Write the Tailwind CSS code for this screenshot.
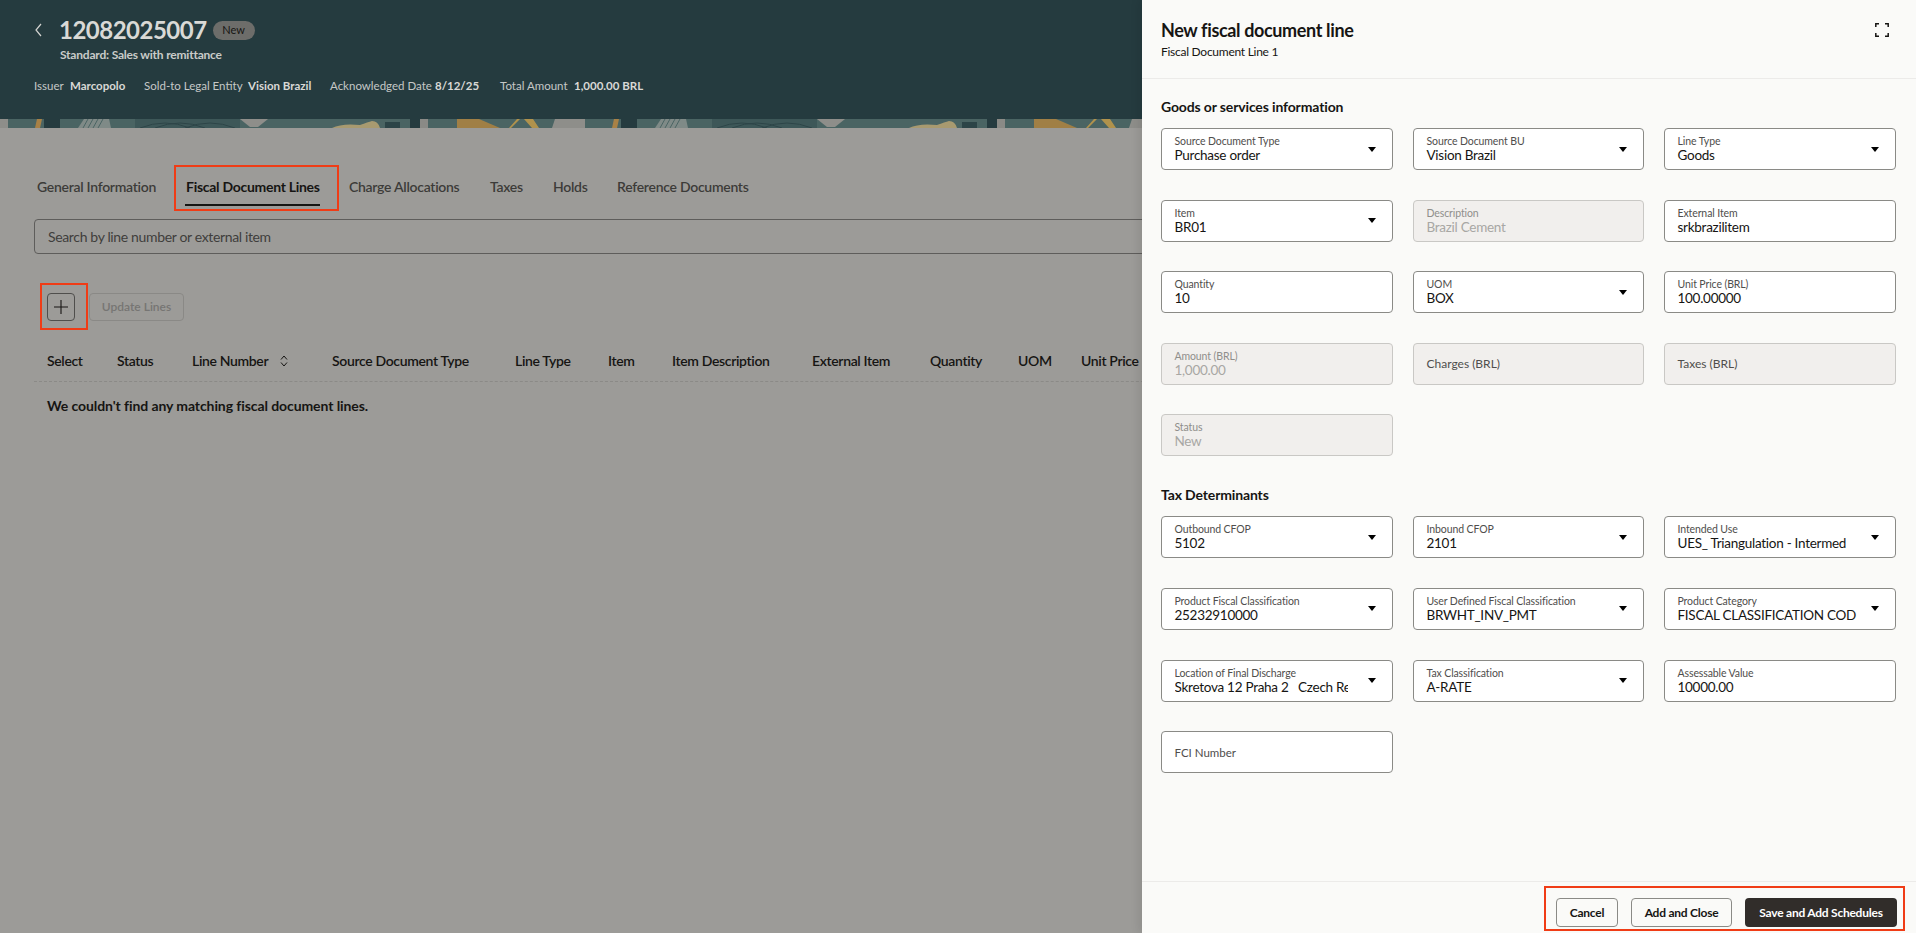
<!DOCTYPE html>
<html lang="en">
<head>
    <meta charset="UTF-8">
    <title>New fiscal document line</title>
    <script src="https://cdn.jsdelivr.net/npm/@tailwindcss/browser@4"></script>
</head>
<body class="relative h-[933px] w-[1916px] overflow-hidden bg-[#9c9b98] font-['Lato','Noto_Sans',sans-serif] text-[#161513]">
    <!-- Page header -->
    <header class="h-[119px] bg-[#253b3f] pl-[34px] pt-[16px] text-[#d9d9d6]">
        <div class="flex h-[28px] items-center">
            <svg class="ml-[1px] mr-[17px] h-[16px] w-[7px]" viewBox="0 0 7 16" fill="none" stroke="#d4d4d1" stroke-width="1.2"><path d="M6 2 1 8l5 6"/></svg>
            <h1 class="text-[24px] font-bold leading-[28px] tracking-[-0.5px]">12082025007</h1>
            <span class="ml-[6px] flex h-[19px] w-[42px] items-center justify-center rounded-full bg-[#6d6d6a] text-[11px] text-[#161513]">New</span>
        </div>
        <p class="ml-[26px] mt-[2px] text-[12px] font-bold leading-[18px] tracking-[-0.017em] text-[#c9cbc9]">Standard: Sales with remittance</p>
        <div class="mt-[13px] flex whitespace-nowrap text-[11.5px] leading-[18px]">
            <span class="w-[36px] text-[#c5c8c7]">Issuer</span><span class="w-[74px] font-bold">Marcopolo</span>
            <span class="w-[104px] text-[#c5c8c7]">Sold-to Legal Entity</span><span class="w-[82px] font-bold">Vision Brazil</span>
            <span class="w-[105px] text-[#c5c8c7]">Acknowledged Date</span><span class="w-[65px] font-bold">8/12/25</span>
            <span class="w-[74px] text-[#c5c8c7]">Total Amount</span><span class="font-bold">1,000.00 BRL</span>
        </div>
    </header>

    <!-- Decorative strip -->
    <svg class="block h-[9px] w-full" xmlns="http://www.w3.org/2000/svg">
        <defs>
            <pattern id="strip" width="577" height="9" patternUnits="userSpaceOnUse">
                <rect width="577" height="9" fill="#4a6463"/>
                <rect width="8" height="9" fill="#8e8e8a"/>
                <path d="M37 0h5l-2 9h-5z" fill="#a88146"/>
                <rect x="44" width="16" height="9" fill="#253b3f"/>
                <path d="M84 0h25l2 9H78z" fill="#7f8a87"/>
                <path d="M88 0l-5 9M93 0l-5 9M98 0l-5 9M103 0l-5 9" stroke="#4a6463" stroke-width="1"/>
                <rect x="135" width="105" height="9" fill="#3d5758"/>
                <path d="M140 9q25-10 50 0M155 9q25-10 50 0M185 9q25-10 50 0" stroke="#2c4447" fill="none"/>
                <path d="M240 0h28l-10 8h-8z" fill="#8e8e8a"/>
                <path d="M332 9q10-5 28-3 8-3 12-4 6 0 8 7z" fill="#a89a70"/>
                <rect x="385" y="3" width="15" height="6" fill="#2c4447"/>
                <path d="M410 0h10v9h-10z" fill="#253b3f"/>
                <rect x="420" width="8" height="9" fill="#8a8a86"/>
                <path d="M457 0h22l21 9h-43z" fill="#a07f45"/>
                <path d="M517 0h3l-9 9h-2zM524 0h9l6 9h-7z" fill="#b0924c"/>
                <path d="M555 0h22v9h-25z" fill="#8e8e8a"/>
            </pattern>
        </defs>
        <rect width="100%" height="9" fill="url(#strip)"/>
    </svg>

    <!-- Main content behind the drawer -->
    <main class="pl-[34px]">
        <nav class="mt-[49px] flex h-[20px] items-center text-[14px] font-semibold leading-[20px] tracking-[-0.02em] text-[#3c3b39]">
            <span class="ml-[3px] w-[149px]">General Information</span>
            <span class="w-[163px] font-bold text-[#161513]">Fiscal Document Lines</span>
            <span class="w-[141px]">Charge Allocations</span>
            <span class="w-[63px]">Taxes</span>
            <span class="w-[64px]">Holds</span>
            <span>Reference Documents</span>
        </nav>
        <div class="ml-[151px] mt-[7px] h-[2px] w-[135px] bg-[#161513]"></div>
        <div class="mt-[13px] flex h-[35px] w-[1200px] items-center rounded-[4px] border border-[#5e5d5b] pl-[13px] text-[14px] tracking-[-0.025em] text-[#3f3e3c]">Search by line number or external item</div>

        <div class="ml-[13px] mt-[39px] flex gap-[14px]">
            <span class="flex h-[28px] w-[28px] items-center justify-center rounded-[4px] border border-[#4f4e4c]">
                <svg class="h-[16px] w-[16px]" viewBox="0 0 16 16" stroke="#161513" stroke-width="1.1"><path d="M8 1v14M1 8h14"/></svg>
            </span>
            <span class="flex h-[28px] w-[95px] items-center justify-center rounded-[4px] border border-[#8a8986] text-[12px] font-semibold text-[#767573]">Update Lines</span>
        </div>

        <div class="ml-[13px] mt-[30px] flex h-[20px] items-center text-[14px] font-semibold leading-[20px] tracking-[-0.025em]">
            <span class="w-[70px]">Select</span>
            <span class="w-[75px]">Status</span>
            <span class="flex w-[140px] items-center">Line Number
                <svg class="ml-[12px] h-[12px] w-[8px]" viewBox="0 0 8 12" fill="none" stroke="#161513"><path d="M1 4.500 4 1l3 3.500M1 7.500 4 11l3-3.500"/></svg>
            </span>
            <span class="w-[183px]">Source Document Type</span>
            <span class="w-[93px]">Line Type</span>
            <span class="w-[64px]">Item</span>
            <span class="w-[140px]">Item Description</span>
            <span class="w-[118px]">External Item</span>
            <span class="w-[88px]">Quantity</span>
            <span class="w-[63px]">UOM</span>
            <span>Unit Price</span>
        </div>
        <div class="mt-[10px] w-[1200px] border-t border-dashed border-[#8b8a87]"></div>
        <p class="ml-[13px] mt-[14px] text-[14px] font-bold leading-[20px] tracking-[-0.006em]">We couldn't find any matching fiscal document lines.</p>
    </main>

    <!-- Annotation boxes -->
    <div class="absolute left-[174px] top-[165px] h-[46px] w-[165px] border-[2.5px] border-[#f03c16]"></div>
    <div class="absolute left-[40px] top-[283px] h-[47px] w-[48px] border-[2.5px] border-[#f03c16]"></div>

    <!-- Drawer -->
    <aside class="absolute right-0 top-0 flex h-[933px] w-[774px] flex-col bg-[#fafaf8] shadow-[-4px_0_8px_rgba(0,0,0,0.08)]">
        <div class="relative h-[79px] border-b border-[#ecebe9] pl-[19px] pt-[16px]">
            <h2 class="text-[18px] font-bold leading-[28px] tracking-[-0.02em]">New fiscal document line</h2>
            <p class="mt-[-1px] text-[12px] leading-[18px] tracking-[-0.022em]">Fiscal Document Line 1</p>
            <svg class="absolute right-[27px] top-[23px] h-[14px] w-[14px]" viewBox="0 0 14 14" fill="none" stroke="#161513" stroke-width="1.500"><path d="M0.800 4V.8H4M10 .8h3.200V4M13.200 10v3.200H10M4 13.200H.8V10"/></svg>
        </div>

        <div class="flex-1 px-[19px]">
            <h3 class="mt-[18px] h-[20px] text-[14px] font-bold leading-[20px] tracking-[-0.01em]">Goods or services information</h3>
            <div class="mt-[11px] grid grid-cols-[232px_231px_232px] gap-x-[20px] gap-y-[29.6px]">
                <div class="flex h-[42px] items-center justify-between rounded-[4px] border border-[#8a8a86] bg-white pl-[12.5px] pr-[16px]"><div><div class="text-[10.5px] leading-[13px] tracking-[-0.01em] text-[#4f4e4c]">Source Document Type</div><div class="text-[13.5px] leading-[15px] tracking-[-0.02em]">Purchase order</div></div><svg class="h-[5px] w-[8px]" viewBox="0 0 8 5"><path d="M0 0h8L4 5z"/></svg></div>
                <div class="flex h-[42px] items-center justify-between rounded-[4px] border border-[#8a8a86] bg-white pl-[12.5px] pr-[16px]"><div><div class="text-[10.5px] leading-[13px] tracking-[-0.01em] text-[#4f4e4c]">Source Document BU</div><div class="text-[13.5px] leading-[15px] tracking-[-0.02em]">Vision Brazil</div></div><svg class="h-[5px] w-[8px]" viewBox="0 0 8 5"><path d="M0 0h8L4 5z"/></svg></div>
                <div class="flex h-[42px] items-center justify-between rounded-[4px] border border-[#8a8a86] bg-white pl-[12.5px] pr-[16px]"><div><div class="text-[10.5px] leading-[13px] tracking-[-0.01em] text-[#4f4e4c]">Line Type</div><div class="text-[13.5px] leading-[15px] tracking-[-0.02em]">Goods</div></div><svg class="h-[5px] w-[8px]" viewBox="0 0 8 5"><path d="M0 0h8L4 5z"/></svg></div>

                <div class="flex h-[42px] items-center justify-between rounded-[4px] border border-[#8a8a86] bg-white pl-[12.5px] pr-[16px]"><div><div class="text-[10.5px] leading-[13px] tracking-[-0.01em] text-[#4f4e4c]">Item</div><div class="text-[13.5px] leading-[15px] tracking-[-0.02em]">BR01</div></div><svg class="h-[5px] w-[8px]" viewBox="0 0 8 5"><path d="M0 0h8L4 5z"/></svg></div>
                <div class="flex h-[42px] items-center rounded-[4px] border border-[#c9c8c5] bg-[#f1efed] pl-[12.5px]"><div><div class="text-[10.5px] leading-[13px] tracking-[-0.01em] text-[#8f8e8b]">Description</div><div class="text-[13.5px] leading-[15px] tracking-[-0.02em] text-[#a8a7a4]">Brazil Cement</div></div></div>
                <div class="flex h-[42px] items-center rounded-[4px] border border-[#8a8a86] bg-white pl-[12.5px]"><div><div class="text-[10.5px] leading-[13px] tracking-[-0.01em] text-[#4f4e4c]">External Item</div><div class="text-[13.5px] leading-[15px] tracking-[-0.02em]">srkbrazilitem</div></div></div>

                <div class="flex h-[42px] items-center rounded-[4px] border border-[#8a8a86] bg-white pl-[12.5px]"><div><div class="text-[10.5px] leading-[13px] tracking-[-0.01em] text-[#4f4e4c]">Quantity</div><div class="text-[13.5px] leading-[15px] tracking-[-0.02em]">10</div></div></div>
                <div class="flex h-[42px] items-center justify-between rounded-[4px] border border-[#8a8a86] bg-white pl-[12.5px] pr-[16px]"><div><div class="text-[10.5px] leading-[13px] tracking-[-0.01em] text-[#4f4e4c]">UOM</div><div class="text-[13.5px] leading-[15px] tracking-[-0.02em]">BOX</div></div><svg class="h-[5px] w-[8px]" viewBox="0 0 8 5"><path d="M0 0h8L4 5z"/></svg></div>
                <div class="flex h-[42px] items-center rounded-[4px] border border-[#8a8a86] bg-white pl-[12.5px]"><div><div class="text-[10.5px] leading-[13px] tracking-[-0.01em] text-[#4f4e4c]">Unit Price (BRL)</div><div class="text-[13.5px] leading-[15px] tracking-[-0.02em]">100.00000</div></div></div>

                <div class="flex h-[42px] items-center rounded-[4px] border border-[#c9c8c5] bg-[#f1efed] pl-[12.5px]"><div><div class="text-[10.5px] leading-[13px] tracking-[-0.01em] text-[#8f8e8b]">Amount (BRL)</div><div class="text-[13.5px] leading-[15px] tracking-[-0.02em] text-[#a8a7a4]">1,000.00</div></div></div>
                <div class="flex h-[42px] items-center rounded-[4px] border border-[#c9c8c5] bg-[#f1efed] pl-[12.5px] text-[12px] text-[#4f4e4c]">Charges (BRL)</div>
                <div class="flex h-[42px] items-center rounded-[4px] border border-[#c9c8c5] bg-[#f1efed] pl-[12.5px] text-[12px] text-[#4f4e4c]">Taxes (BRL)</div>

                <div class="flex h-[42px] items-center rounded-[4px] border border-[#c9c8c5] bg-[#f1efed] pl-[12.5px]"><div><div class="text-[10.5px] leading-[13px] tracking-[-0.01em] text-[#8f8e8b]">Status</div><div class="text-[13.5px] leading-[15px] tracking-[-0.02em] text-[#a8a7a4]">New</div></div></div>
            </div>

            <h3 class="mt-[29px] h-[20px] text-[14px] font-bold leading-[20px] tracking-[-0.01em]">Tax Determinants</h3>
            <div class="mt-[11px] grid grid-cols-[232px_231px_232px] gap-x-[20px] gap-y-[29.6px]">
                <div class="flex h-[42px] items-center justify-between rounded-[4px] border border-[#8a8a86] bg-white pl-[12.5px] pr-[16px]"><div><div class="text-[10.5px] leading-[13px] tracking-[-0.01em] text-[#4f4e4c]">Outbound CFOP</div><div class="text-[13.5px] leading-[15px] tracking-[-0.02em]">5102</div></div><svg class="h-[5px] w-[8px]" viewBox="0 0 8 5"><path d="M0 0h8L4 5z"/></svg></div>
                <div class="flex h-[42px] items-center justify-between rounded-[4px] border border-[#8a8a86] bg-white pl-[12.5px] pr-[16px]"><div><div class="text-[10.5px] leading-[13px] tracking-[-0.01em] text-[#4f4e4c]">Inbound CFOP</div><div class="text-[13.5px] leading-[15px] tracking-[-0.02em]">2101</div></div><svg class="h-[5px] w-[8px]" viewBox="0 0 8 5"><path d="M0 0h8L4 5z"/></svg></div>
                <div class="flex h-[42px] items-center justify-between rounded-[4px] border border-[#8a8a86] bg-white pl-[12.5px] pr-[16px]"><div class="whitespace-pre"><div class="text-[10.5px] leading-[13px] tracking-[-0.01em] text-[#4f4e4c]">Intended Use</div><div class="text-[13.5px] leading-[15px] tracking-[-0.02em]">UES_ Triangulation - Intermed</div></div><svg class="h-[5px] w-[8px]" viewBox="0 0 8 5"><path d="M0 0h8L4 5z"/></svg></div>

                <div class="flex h-[42px] items-center justify-between rounded-[4px] border border-[#8a8a86] bg-white pl-[12.5px] pr-[16px]"><div><div class="text-[10.5px] leading-[13px] tracking-[-0.01em] text-[#4f4e4c]">Product Fiscal Classification</div><div class="text-[13.5px] leading-[15px] tracking-[-0.02em]">25232910000</div></div><svg class="h-[5px] w-[8px]" viewBox="0 0 8 5"><path d="M0 0h8L4 5z"/></svg></div>
                <div class="flex h-[42px] items-center justify-between rounded-[4px] border border-[#8a8a86] bg-white pl-[12.5px] pr-[16px]"><div><div class="text-[10.5px] leading-[13px] tracking-[-0.01em] text-[#4f4e4c]">User Defined Fiscal Classification</div><div class="text-[13.5px] leading-[15px] tracking-[-0.02em]">BRWHT_INV_PMT</div></div><svg class="h-[5px] w-[8px]" viewBox="0 0 8 5"><path d="M0 0h8L4 5z"/></svg></div>
                <div class="flex h-[42px] items-center justify-between rounded-[4px] border border-[#8a8a86] bg-white pl-[12.5px] pr-[16px]"><div class="whitespace-pre"><div class="text-[10.5px] leading-[13px] tracking-[-0.01em] text-[#4f4e4c]">Product Category</div><div class="text-[13.5px] leading-[15px] tracking-[-0.02em]">FISCAL CLASSIFICATION COD</div></div><svg class="h-[5px] w-[8px]" viewBox="0 0 8 5"><path d="M0 0h8L4 5z"/></svg></div>

                <div class="flex h-[42px] items-center justify-between rounded-[4px] border border-[#8a8a86] bg-white pl-[12.5px] pr-[16px]"><div class="w-[173px] overflow-hidden whitespace-pre"><div class="text-[10.5px] leading-[13px] tracking-[-0.01em] text-[#4f4e4c]">Location of Final Discharge</div><div class="text-[13.5px] leading-[15px] tracking-[-0.02em]">Skretova 12 Praha 2   Czech Republic</div></div><svg class="h-[5px] w-[8px]" viewBox="0 0 8 5"><path d="M0 0h8L4 5z"/></svg></div>
                <div class="flex h-[42px] items-center justify-between rounded-[4px] border border-[#8a8a86] bg-white pl-[12.5px] pr-[16px]"><div><div class="text-[10.5px] leading-[13px] tracking-[-0.01em] text-[#4f4e4c]">Tax Classification</div><div class="text-[13.5px] leading-[15px] tracking-[-0.02em]">A-RATE</div></div><svg class="h-[5px] w-[8px]" viewBox="0 0 8 5"><path d="M0 0h8L4 5z"/></svg></div>
                <div class="flex h-[42px] items-center rounded-[4px] border border-[#8a8a86] bg-white pl-[12.5px]"><div><div class="text-[10.5px] leading-[13px] tracking-[-0.01em] text-[#4f4e4c]">Assessable Value</div><div class="text-[13.5px] leading-[15px] tracking-[-0.02em]">10000.00</div></div></div>

                <div class="flex h-[42px] items-center rounded-[4px] border border-[#8a8a86] bg-white pl-[12.5px] text-[11.5px] text-[#4f4e4c]">FCI Number</div>
            </div>
        </div>

        <footer class="relative flex h-[52px] items-start justify-end gap-[13px] border-t border-[#ecebe9] pr-[19px] pt-[16px] text-[12px] font-bold tracking-[-0.02em]">
            <button class="flex h-[29px] w-[62px] items-center justify-center rounded-[4px] border border-[#8a8a86]">Cancel</button>
            <button class="flex h-[29px] w-[101px] items-center justify-center rounded-[4px] border border-[#8a8a86]">Add and Close</button>
            <button class="flex h-[29px] w-[152px] items-center justify-center rounded-[4px] bg-[#312d2a] text-white">Save and Add Schedules</button>
            <div class="absolute left-[402px] top-[4px] h-[45px] w-[361px] border-[2.5px] border-[#f03c16]"></div>
        </footer>
    </aside>
</body>
</html>
